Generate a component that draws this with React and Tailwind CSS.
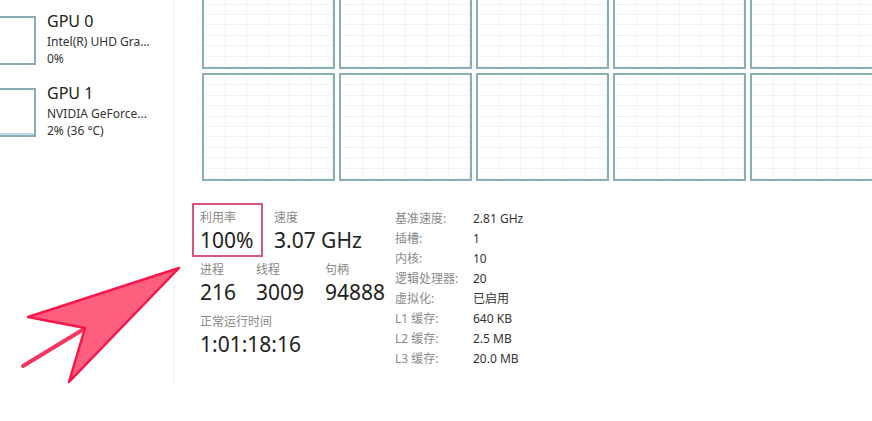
import React from "react";

const FONT = "font-['Segoe_UI','Noto_Sans','Noto_Sans_CJK_SC',sans-serif]";

function GridBox() {
  return (
    <div className="w-[133px] h-[108px] border-2 border-[#88afb3] bg-white grid grid-cols-6 grid-rows-10 overflow-hidden">
      {Array.from({ length: 60 }).map((_, i) => (
        <div key={i} className="border-r border-b border-[#eef4fa]" />
      ))}
    </div>
  );
}

function GpuItem({ name, model, usage, active }) {
  return (
    <div className="flex items-start">
      <div className="w-[70px] h-[49px] -ml-[34px] shrink-0 border-2 border-[#88afb3] flex flex-col justify-end">
        {active && <div className="h-[2px] bg-[#c3d9ea]" />}
      </div>
      <div className="ml-[11px] -mt-[6px] leading-none">
        <div className="text-[16px] text-[#222] leading-[22px]">{name}</div>
        <div className="text-[12px] text-[#333] leading-[17px] mt-[1px]">{model}</div>
        <div className="text-[12px] text-[#333] leading-[17px]">{usage}</div>
      </div>
    </div>
  );
}

function Stat({ label, value, className = "" }) {
  return (
    <div className={className}>
      <div className="text-[12px] text-[#888] leading-[16px]">{label}</div>
      <div className="text-[21px] text-[#222] leading-[30px] -mt-[1px]">{value}</div>
    </div>
  );
}

const specs = [
  ["基准速度:", "2.81 GHz"],
  ["插槽:", "1"],
  ["内核:", "10"],
  ["逻辑处理器:", "20"],
  ["虚拟化:", "已启用"],
  ["L1 缓存:", "640 KB"],
  ["L2 缓存:", "2.5 MB"],
  ["L3 缓存:", "20.0 MB"],
];

export default function App() {
  return (
    <div className={`w-[872px] h-[421px] bg-white overflow-hidden relative ${FONT}`}>
      <div className="flex h-[383px]">
        {/* Sidebar */}
        <aside className="w-[174px] shrink-0 border-r border-[#efefef] overflow-hidden pt-[16px] flex flex-col gap-[21px]">
          <GpuItem name="GPU 0" model="Intel(R) UHD Gra..." usage="0%" />
          <GpuItem name="GPU 1" model="NVIDIA GeForce..." usage="2% (36 °C)" active />
        </aside>

        {/* Main */}
        <main className="flex-1 overflow-hidden pl-[28px]">
          <div className="grid grid-cols-[repeat(5,133px)] gap-[4px] -mt-[39px] w-max">
            {Array.from({ length: 10 }).map((_, i) => (
              <GridBox key={i} />
            ))}
          </div>

          <div className="flex mt-[29px] -ml-[2px]">
            <div className="w-[195px] shrink-0 flex flex-col gap-[7px]">
              <div className="flex">
                <Stat label="利用率" value="100%" className="w-[74px]" />
                <Stat label="速度" value="3.07 GHz" />
              </div>
              <div className="flex">
                <Stat label="进程" value="216" className="w-[56px]" />
                <Stat label="线程" value="3009" className="w-[69px]" />
                <Stat label="句柄" value="94888" />
              </div>
              <Stat label="正常运行时间" value="1:01:18:16" />
            </div>

            <div className="flex flex-col -mt-[1px]">
              {specs.map(([k, v]) => (
                <div key={k} className="flex text-[12px] leading-[20px]">
                  <span className="w-[78px] text-[#8a8a8a]">{k}</span>
                  <span className="text-[#333]">{v}</span>
                </div>
              ))}
            </div>
          </div>
        </main>
      </div>

      {/* annotation: highlight box */}
      <div className="absolute left-[192px] top-[203px] w-[71px] h-[54px] border-2 border-[#d9557f]" />

      {/* annotation: arrow */}
      <svg className="absolute left-0 top-0 pointer-events-none" width="872" height="421" viewBox="0 0 872 421">
        <line x1="84" y1="329" x2="23" y2="366" stroke="#f2365f" strokeWidth="4" strokeLinecap="round" />
        <polygon
          points="179,268 28,317 85,328 69,382"
          fill="#ff5f7f"
          stroke="#f5184b"
          strokeWidth="2.5"
          strokeLinejoin="round"
        />
      </svg>
    </div>
  );
}
